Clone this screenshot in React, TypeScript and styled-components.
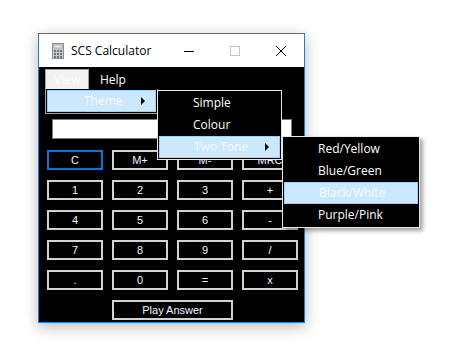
import React from 'react';
import styled, { createGlobalStyle } from 'styled-components';

const GlobalStyle = createGlobalStyle`
  body {
    margin: 0;
    background: #ffffff;
  }
`;

const uiFont = `"Open Sans", "Noto Sans", sans-serif`;
const btnFont = `"Liberation Sans", Arial, sans-serif`;

const keys = [
  'C', 'M+', 'M-', 'MRC',
  '1', '2', '3', '+',
  '4', '5', '6', '-',
  '7', '8', '9', '/',
  '.', '0', '=', 'x',
];

function CalcIcon() {
  return (
    <svg width="12" height="16" viewBox="0 0 12 16">
      <rect x="0.5" y="0.5" width="11" height="15" fill="#c9cccf" stroke="#8d9195" />
      <rect x="2" y="2" width="8" height="3" fill="#e8f0e8" stroke="#8d9195" strokeWidth="0.6" />
      {[0, 1, 2].map((r) =>
        [0, 1, 2].map((c) => (
          <rect key={`${r}${c}`} x={2 + c * 3} y={7 + r * 3} width="2" height="2" fill="#6f7478" />
        )),
      )}
    </svg>
  );
}

function Arrow() {
  return (
    <svg width="5" height="8" viewBox="0 0 5 8">
      <path d="M0 0 L4 4 L0 8 Z" fill="#000" />
    </svg>
  );
}

function App() {
  return (
    <Page>
      <GlobalStyle />
      <Window>
        <TitleBar>
          <TitleIcon>
            <CalcIcon />
          </TitleIcon>
          <Title>SCS Calculator</Title>
          <Controls>
            <Control>
              <svg width="10" height="10" viewBox="0 0 10 10">
                <path d="M0 5.5 H10" stroke="#000" strokeWidth="1" />
              </svg>
            </Control>
            <Control>
              <svg width="10" height="10" viewBox="0 0 10 10">
                <rect x="0.5" y="0.5" width="9" height="9" fill="none" stroke="#c4c4c4" />
              </svg>
            </Control>
            <Control>
              <svg width="10" height="10" viewBox="0 0 10 10">
                <path d="M0 0 L10 10 M10 0 L0 10" stroke="#000" strokeWidth="1" />
              </svg>
            </Control>
          </Controls>
        </TitleBar>

        <MenuBar>
          <MenuItem $open>View</MenuItem>
          <MenuItem>Help</MenuItem>
        </MenuBar>

        <Body>
          <Display />
          <KeyGrid>
            {keys.map((k) => (
              <Key key={k} $focused={k === 'C'}>
                {k}
              </Key>
            ))}
            <PlayKey>Play Answer</PlayKey>
          </KeyGrid>
        </Body>

        <ViewMenu>
          <HotItem $pad={36}>
            Theme
            <ArrowSlot>
              <Arrow />
            </ArrowSlot>
          </HotItem>
        </ViewMenu>

        <ThemeMenu>
          <DropItem>Simple</DropItem>
          <DropItem>Colour</DropItem>
          <HotItem $pad={34}>
            Two Tone
            <ArrowSlot>
              <Arrow />
            </ArrowSlot>
          </HotItem>
        </ThemeMenu>

        <ToneMenu>
          <DropItem>Red/Yellow</DropItem>
          <DropItem>Blue/Green</DropItem>
          <HotItem $pad={34}>Black/White</HotItem>
          <DropItem>Purple/Pink</DropItem>
        </ToneMenu>
      </Window>
    </Page>
  );
}

const Page = styled.div`
  width: 458px;
  height: 345px;
  box-sizing: border-box;
  padding: 33px 0 0 38px;
  overflow: hidden;
`;

const Window = styled.div`
  position: relative;
  width: 267px;
  height: 290px;
  box-sizing: border-box;
  border: 1px solid #1883d7;
  background: #000;
  display: flex;
  flex-direction: column;
  box-shadow: 0 4px 14px rgba(0, 0, 0, 0.28);
`;

const TitleBar = styled.div`
  height: 33px;
  flex: none;
  background: #fff;
  display: flex;
  align-items: center;
`;

const TitleIcon = styled.div`
  width: 12px;
  height: 16px;
  margin-left: 13px;
  display: flex;
`;

const Title = styled.div`
  margin-left: 7px;
  font-family: ${uiFont};
  font-size: 12px;
  color: #000;
  flex: 1;
`;

const Controls = styled.div`
  display: flex;
  height: 100%;
`;

const Control = styled.div`
  width: 46px;
  height: 100%;
  display: flex;
  align-items: center;
  justify-content: center;
`;

const MenuBar = styled.div`
  height: 22px;
  flex: none;
  display: flex;
  align-items: flex-end;
  padding-left: 6px;
  gap: 2px;
`;

const MenuItem = styled.div<{ $open?: boolean }>`
  height: 20px;
  box-sizing: border-box;
  padding: 0 8px;
  display: flex;
  align-items: center;
  font-family: ${uiFont};
  font-size: 12px;
  color: ${(p) => (p.$open ? '#fcfcfc' : '#fff')};
  background: ${(p) => (p.$open ? '#f2f2f2' : 'transparent')};
  border: 1px solid ${(p) => (p.$open ? '#a0a0a0' : 'transparent')};
  border-bottom: none;
  width: ${(p) => (p.$open ? '44px' : 'auto')};
`;

const Body = styled.div`
  display: flex;
  flex-direction: column;
  padding: 30px 0 0 8px;
`;

const Display = styled.div`
  width: 240px;
  height: 20px;
  margin-left: 5px;
  box-sizing: border-box;
  background: #fff;
  border: 1px solid #7a7a7a;
`;

const KeyGrid = styled.div`
  margin-top: 11px;
  display: grid;
  grid-template-columns: repeat(4, 56px);
  grid-auto-rows: 20px;
  column-gap: 9px;
  row-gap: 10px;
`;

const Key = styled.div<{ $focused?: boolean }>`
  box-sizing: border-box;
  border: 2px solid ${(p) => (p.$focused ? '#0078d7' : '#d2d2d2')};
  background: #000;
  color: #f2f6ff;
  font-family: ${btnFont};
  font-size: 11px;
  display: flex;
  align-items: center;
  justify-content: center;
`;

const PlayKey = styled(Key)`
  grid-column: 2 / span 2;
`;

const Dropdown = styled.div`
  position: absolute;
  box-sizing: border-box;
  background: #000;
  display: flex;
  flex-direction: column;
  padding: 1px;
`;

const ViewMenu = styled(Dropdown)`
  left: 6px;
  top: 55px;
  width: 113px;
  border: 1px solid #a0a0a0;
  border-top: none;
`;

const ThemeMenu = styled(Dropdown)`
  left: 118px;
  top: 56px;
  width: 125px;
  border: 1px solid #e6e6e6;
`;

const ToneMenu = styled(Dropdown)`
  left: 243px;
  top: 102px;
  width: 138px;
  border: 1px solid #e6e6e6;
  box-shadow: 3px 3px 4px rgba(0, 0, 0, 0.35);
`;

const DropItem = styled.div`
  height: 22px;
  box-sizing: border-box;
  padding-left: 34px;
  padding-bottom: 2px;
  display: flex;
  align-items: center;
  font-family: ${uiFont};
  font-size: 12px;
  color: #fff;
`;

const HotItem = styled(DropItem)<{ $pad: number }>`
  position: relative;
  padding-left: ${(p) => p.$pad}px;
  background: #cce8ff;
  border: 1px solid #99d1ff;
  color: #f4faff;
`;

const ArrowSlot = styled.span`
  position: absolute;
  right: 9px;
  top: 6px;
  display: flex;
`;

export default App;
